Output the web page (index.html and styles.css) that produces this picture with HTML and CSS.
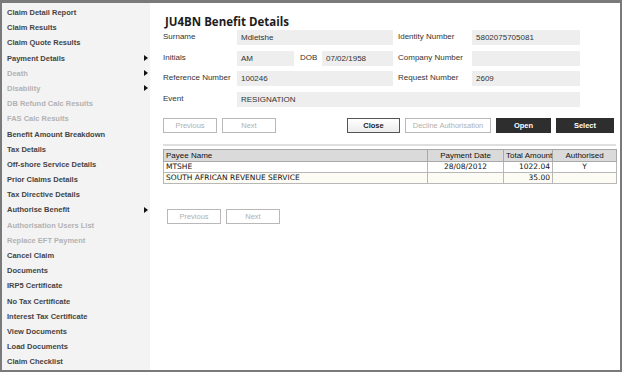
FILE: index.html
```html
<!DOCTYPE html>
<html lang="en">
<head>
  <meta charset="UTF-8">
  <title>JU4BN Benefit Details</title>
  <link rel="stylesheet" href="styles.css">
</head>
<body>
  <div class="frame">
    <ul class="menu">
      <li>Claim Detail Report</li>
      <li>Claim Results</li>
      <li>Claim Quote Results</li>
      <li class="sub">Payment Details</li>
      <li class="off sub">Death</li>
      <li class="off sub">Disability</li>
      <li class="off">DB Refund Calc Results</li>
      <li class="off">FAS Calc Results</li>
      <li>Benefit Amount Breakdown</li>
      <li>Tax Details</li>
      <li>Off-shore Service Details</li>
      <li>Prior Claims Details</li>
      <li>Tax Directive Details</li>
      <li class="sub">Authorise Benefit</li>
      <li class="off">Authorisation Users List</li>
      <li class="off">Replace EFT Payment</li>
      <li>Cancel Claim</li>
      <li>Documents</li>
      <li>IRP5 Certificate</li>
      <li>No Tax Certificate</li>
      <li>Interest Tax Certificate</li>
      <li>View Documents</li>
      <li>Load Documents</li>
      <li>Claim Checklist</li>
    </ul>

    <div class="main">
      <h1>JU4BN Benefit Details</h1>

      <div class="details">
        <span class="lbl">Surname</span>
        <span class="val wide-a">Mdletshe</span>
        <span class="lbl lbl2">Identity Number</span>
        <span class="val">5802075705081</span>

        <span class="lbl">Initials</span>
        <span class="val">AM</span>
        <span class="lbl dob">DOB</span>
        <span class="val">07/02/1958</span>
        <span class="lbl lbl2">Company Number</span>
        <span class="val"></span>

        <span class="lbl">Reference Number</span>
        <span class="val wide-a">100246</span>
        <span class="lbl lbl2">Request Number</span>
        <span class="val">2609</span>

        <span class="lbl">Event</span>
        <span class="val wide-all">RESIGNATION</span>
      </div>

      <div class="actions">
        <button class="btn" disabled>Previous</button>
        <button class="btn" disabled>Next</button>
        <button class="btn close">Close</button>
        <button class="btn decline" disabled>Decline Authorisation</button>
        <button class="btn dark open">Open</button>
        <button class="btn dark select">Select</button>
      </div>

      <hr class="sep">

      <table class="payees">
        <tr>
          <th class="c-name">Payee Name</th>
          <th class="c-date">Payment Date</th>
          <th class="c-amt">Total Amount</th>
          <th class="c-auth">Authorised</th>
        </tr>
        <tr>
          <td>MTSHE</td>
          <td class="c-date">28/08/2012</td>
          <td class="c-amt">1022.04</td>
          <td class="c-auth">Y</td>
        </tr>
        <tr class="alt">
          <td>SOUTH AFRICAN REVENUE SERVICE</td>
          <td class="c-date"></td>
          <td class="c-amt">35.00</td>
          <td class="c-auth"></td>
        </tr>
      </table>

      <div class="pager">
        <button class="btn" disabled>Previous</button>
        <button class="btn" disabled>Next</button>
      </div>
    </div>
  </div>
</body>
</html>
```

FILE: styles.css
```css
body {
  margin: 0;
  font-family: "Liberation Sans", Arial, sans-serif;
  background: #fff;
}

.frame {
  display: flex;
  width: 618px;
  height: 367px;
  border: 2px solid #7a7a7a;
  border-top-width: 3px;
}

.menu {
  flex-shrink: 0;
  list-style: none;
  margin: 0;
  padding: 2px 0 0 0;
  width: 148px;
  background: #f3f3f3;
}

.menu li {
  position: relative;
  height: 15.2px;
  line-height: 15.2px;
  padding-left: 5px;
  font-size: 7.5px;
  font-weight: bold;
  color: #444;
  white-space: nowrap;
}

.menu li.off {
  color: #b2b2b2;
}

.menu li.sub::after {
  content: "";
  position: absolute;
  left: 142px;
  top: 4.5px;
  border-left: 4px solid #111;
  border-top: 3px solid transparent;
  border-bottom: 3px solid transparent;
}

.main {
  flex: 1;
  min-width: 0;
  padding: 0 0 0 13px;
}

h1 {
  margin: 10px 0 0 2px;
  height: 17px;
  font-family: "Open Sans", sans-serif;
  font-size: 11.5px;
  line-height: 17px;
  font-weight: bold;
  color: #1c1c1c;
}

.details {
  display: grid;
  grid-template-columns: 74px 57px 28px 71px 79px 108px;
  grid-auto-rows: 15px;
  row-gap: 5.5px;
  margin-top: 0;
  font-size: 8px;
  color: #333;
}

.lbl {
  line-height: 13px;
}

.lbl2 {
  grid-column: 5;
  padding-left: 5px;
}

.dob {
  padding-left: 6px;
}

.val {
  background: #eeeeee;
  line-height: 15px;
  padding-left: 4px;
}

.wide-a {
  grid-column: 2 / 5;
}

.wide-all {
  grid-column: 2 / 7;
}

.actions {
  display: flex;
  gap: 5px;
  width: 451px;
  margin-top: 11px;
}

.btn {
  height: 15px;
  width: 54px;
  padding: 0;
  font-family: "Liberation Sans", Arial, sans-serif;
  font-size: 7.5px;
  color: #b0b0b0;
  background: #fff;
  border: 1px solid #b8b8b8;
  border-radius: 0;
}

.close {
  margin-left: auto;
  width: 53px;
  font-weight: bold;
  color: #222;
  border-color: #555;
  background: linear-gradient(#fff, #ececec);
}

.decline {
  width: 86px;
}

.dark {
  font-weight: bold;
  color: #fff;
  background: #2e2e2e;
  border-color: #2e2e2e;
}

.open {
  width: 55px;
}

.select {
  width: 58px;
}

.sep {
  width: 453px;
  margin: 11px 0 0 0;
  border: 0;
  border-top: 2px solid #dedede;
}

.payees {
  width: 454px;
  margin-top: 3px;
  table-layout: fixed;
  border-collapse: collapse;
  font-family: "DejaVu Sans", Verdana, sans-serif;
  font-size: 7.5px;
  color: #111;
}

.payees th {
  height: 11px;
  padding: 0 2px;
  line-height: 11px;
  font-family: "Liberation Sans", Arial, sans-serif;
  font-weight: normal;
  font-size: 8px;
  text-align: left;
  white-space: nowrap;
  background: #dadada;
  border: 1px solid #a8a8a8;
}

.payees td {
  height: 10px;
  padding: 0 2px;
  line-height: 10px;
  white-space: nowrap;
  border: 1px solid #b8b8b8;
}

.payees tr.alt td {
  background: #fcfcf4;
}

.payees .c-date {
  width: 71px;
  text-align: center;
}

.payees .c-amt {
  width: 44px;
  text-align: right;
}

.payees .c-auth {
  width: 59px;
  text-align: center;
}

.pager {
  display: flex;
  gap: 5px;
  margin: 25px 0 0 4px;
}
```
